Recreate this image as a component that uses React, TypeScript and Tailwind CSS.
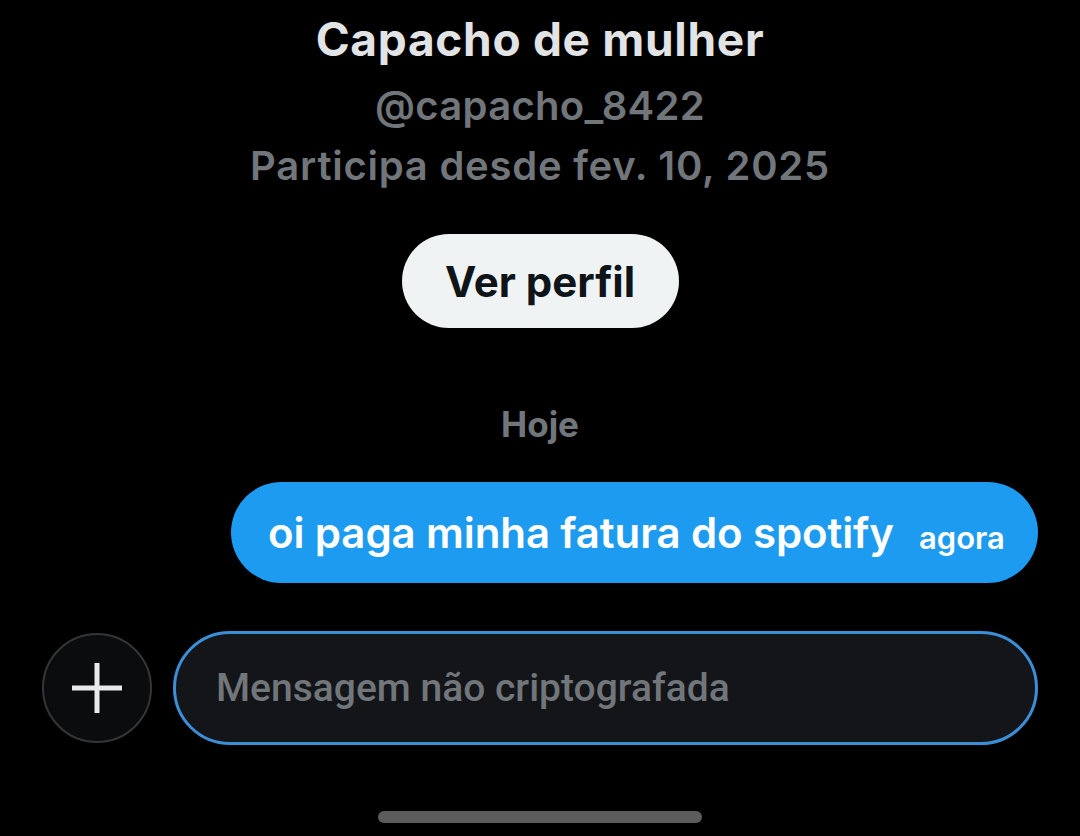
import React from "react";

export default function App() {
  return (
    <div
      className="w-[1080px] h-[836px] bg-black flex flex-col items-center overflow-hidden"
      style={{ fontFamily: "Inter, 'Noto Sans', sans-serif" }}
    >
      <div className="mt-[11px] text-[46px] leading-[56px] font-bold text-[#e1e3e4] tracking-[0.7px]">
        Capacho de mulher
      </div>
      <div className="mt-[9px] text-[40px] leading-[60px] font-semibold text-[#71767b] tracking-[0.3px]">
        @capacho_8422
      </div>
      <div className="text-[40px] leading-[60px] font-semibold text-[#71767b] tracking-[0.75px]">
        Participa desde fev. 10, 2025
      </div>
      <div className="mt-[38px] w-[277px] h-[94px] rounded-full bg-[#eff3f4] flex items-center justify-center text-[42px] font-bold text-[#0f1419]">
        Ver perfil
      </div>
      <div className="mt-[74px] text-[35px] leading-[44px] font-bold text-[#71767b]">
        Hoje
      </div>
      <div className="self-stretch flex justify-end pr-[42px] mt-[36px]">
        <div className="h-[101px] w-[807px] rounded-full bg-[#1d9bf0] flex items-center pl-[37px] text-white">
          <span className="text-[42px] font-semibold tracking-[-0.1px]">
            oi paga minha fatura do spotify
          </span>
          <span className="ml-[25px] mt-[12px] text-[31px] font-semibold">agora</span>
        </div>
      </div>
      <div className="self-stretch flex items-center pl-[42px] pr-[42px] mt-[48px] gap-[21px]">
        <div className="w-[110px] h-[110px] rounded-full border-2 border-[#333639] bg-[#0b0c0d] flex items-center justify-center shrink-0">
          <svg width="54" height="54" viewBox="0 0 54 54">
            <path d="M27 2v50M2 27h50" stroke="#e7e9ea" strokeWidth="5" />
          </svg>
        </div>
        <div className="flex-1 h-[114px] rounded-full border-[3px] border-[#3a8fd6] bg-[#141518] flex items-center pl-[40px]">
          <span
            className="text-[39px] text-[#71767b]"
            style={{ fontFamily: "Roboto, sans-serif", fontWeight: 500 }}
          >
            Mensagem não criptografada
          </span>
        </div>
      </div>
      <div className="mt-[66px] w-[324px] h-[12px] rounded-full bg-[#5c5c5c]" />
    </div>
  );
}
